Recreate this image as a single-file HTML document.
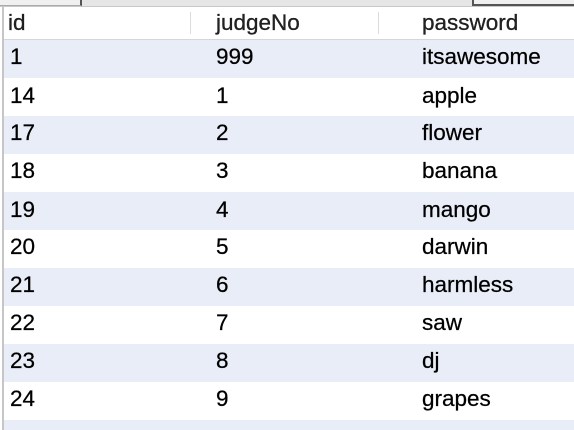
<!DOCTYPE html>
<html><head><meta charset="utf-8"><style>
html,body{margin:0;padding:0;width:574px;height:430px;overflow:hidden;background:#fff;font-family:"Liberation Sans",Arial,sans-serif;position:relative;}
.top{position:absolute;left:0;top:0;width:574px;height:6px;background:#e6e6e6;border-bottom:1px solid #c8c8c8;}
.tb1{position:absolute;left:0;top:0;width:80px;height:5px;background:#f0f0f0;border-right:2px solid #555;border-bottom:1px solid #aaa;}
.tb2{position:absolute;left:472px;top:0;width:110px;height:4px;background:#f0f0f0;border-left:2px solid #555;border-bottom:2px solid #555;}
.lb{position:absolute;left:2px;top:7px;width:2px;height:423px;background:#c6c6c6;}
.hdr{position:absolute;left:4px;top:7px;width:570px;height:32px;border-bottom:1px solid #d6d6d6;background:#fff;}
.sep{position:absolute;top:5px;width:1px;height:22px;background:#dcdcdc;}
.row{position:absolute;left:4px;width:570px;height:38px;}
.a{background:#e9edf8;}
.t{position:absolute;font-size:22.5px;color:#000;line-height:24px;-webkit-text-stroke:0.25px #000;}
</style></head><body>
<div class="top"></div><div class="tb1"></div><div class="tb2"></div>
<div class="hdr">
<div class="t" style="left:4px;top:4px;color:#222">id</div>
<div class="sep" style="left:186px"></div>
<div class="t" style="left:212px;top:4px;color:#222">judgeNo</div>
<div class="sep" style="left:374px"></div>
<div class="t" style="left:418px;top:4px;color:#222">password</div>
</div>
<div class="row a" style="top:40px"><div class="t" style="left:6px;top:5px">1</div><div class="t" style="left:212px;top:5px">999</div><div class="t" style="left:418px;top:5px">itsawesome</div></div>
<div class="row" style="top:78px"><div class="t" style="left:6px;top:6px">14</div><div class="t" style="left:212px;top:6px">1</div><div class="t" style="left:418px;top:6px">apple</div></div>
<div class="row a" style="top:116px"><div class="t" style="left:6px;top:5px">17</div><div class="t" style="left:212px;top:5px">2</div><div class="t" style="left:418px;top:5px">flower</div></div>
<div class="row" style="top:154px"><div class="t" style="left:6px;top:5px">18</div><div class="t" style="left:212px;top:5px">3</div><div class="t" style="left:418px;top:5px">banana</div></div>
<div class="row a" style="top:192px"><div class="t" style="left:6px;top:6px">19</div><div class="t" style="left:212px;top:6px">4</div><div class="t" style="left:418px;top:6px">mango</div></div>
<div class="row" style="top:230px"><div class="t" style="left:6px;top:5px">20</div><div class="t" style="left:212px;top:5px">5</div><div class="t" style="left:418px;top:5px">darwin</div></div>
<div class="row a" style="top:268px"><div class="t" style="left:6px;top:5px">21</div><div class="t" style="left:212px;top:5px">6</div><div class="t" style="left:418px;top:5px">harmless</div></div>
<div class="row" style="top:306px"><div class="t" style="left:6px;top:5px">22</div><div class="t" style="left:212px;top:5px">7</div><div class="t" style="left:418px;top:5px">saw</div></div>
<div class="row a" style="top:344px"><div class="t" style="left:6px;top:5px">23</div><div class="t" style="left:212px;top:5px">8</div><div class="t" style="left:418px;top:5px">dj</div></div>
<div class="row" style="top:382px"><div class="t" style="left:6px;top:5px">24</div><div class="t" style="left:212px;top:5px">9</div><div class="t" style="left:418px;top:5px">grapes</div></div>
<div class="row a" style="top:420px;height:10px"></div>
<div class="lb"></div>
</body></html>
